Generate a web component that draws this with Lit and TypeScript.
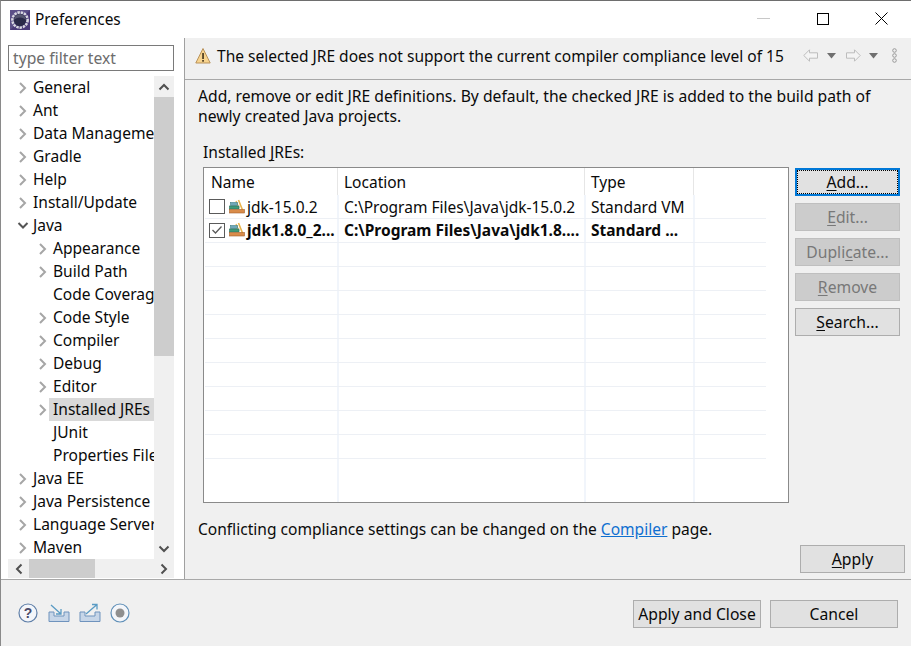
import { LitElement, html, css } from "lit";
import { customElement } from "lit/decorators.js";

const chevR = (c = "#a6a6a6") => html`<svg class="chev" width="10" height="12" viewBox="0 0 10 12"><path d="M2 1 L7 6 L2 11" fill="none" stroke=${c} stroke-width="2"/></svg>`;
const chevD = html`<svg class="chev" width="12" height="10" viewBox="0 0 12 10"><path d="M1.5 2 L6 6.5 L10.5 2" fill="none" stroke="#555" stroke-width="2"/></svg>`;

const jre = html`<svg class="jre" width="16" height="16" viewBox="0 0 16 16">
  <path d="M9.5 1 L14.5 13.5" stroke="#e9b44c" stroke-width="1.6" fill="none"/>
  <path d="M7 2 L10 9" stroke="#e9b44c" stroke-width="1.2" fill="none"/>
  <rect x="1.5" y="3.5" width="7" height="3" fill="#6fa8b8" stroke="#3f7f86" stroke-width=".6"/>
  <rect x="0.5" y="7" width="9.5" height="3" fill="#3f9a7a" stroke="#2b6f58" stroke-width=".6"/>
  <rect x="0.5" y="10.5" width="15" height="3.5" fill="#d98c4a" stroke="#a3602a" stroke-width=".6"/>
</svg>`;

type Node = { t: string; l: number; k?: "r" | "d" | "n"; sel?: boolean };
const tree: Node[] = [
  { t: "General", l: 0 }, { t: "Ant", l: 0 }, { t: "Data Management", l: 0 }, { t: "Gradle", l: 0 },
  { t: "Help", l: 0 }, { t: "Install/Update", l: 0 }, { t: "Java", l: 0, k: "d" },
  { t: "Appearance", l: 1 }, { t: "Build Path", l: 1 }, { t: "Code Coverage", l: 1, k: "n" },
  { t: "Code Style", l: 1 }, { t: "Compiler", l: 1 }, { t: "Debug", l: 1 }, { t: "Editor", l: 1 },
  { t: "Installed JREs", l: 1, sel: true }, { t: "JUnit", l: 1, k: "n" }, { t: "Properties Files Editor", l: 1, k: "n" },
  { t: "Java EE", l: 0 }, { t: "Java Persistence", l: 0 }, { t: "Language Servers", l: 0 }, { t: "Maven", l: 0 },
];

const arrow = (flip: boolean) => html`<svg class=${flip ? "flip" : ""} width="15" height="13" viewBox="0 0 15 13"><path d="M.8 6.5 L6.5 .8 V3.8 H14.5 V9.2 H6.5 V12.2 Z" fill="#f4f4f4" stroke="#bdbdbd"/></svg>`;
const drop = html`<svg width="9" height="6" viewBox="0 0 9 6"><path d="M0 0 H9 L4.5 5.5 Z" fill="#6f6f6f"/></svg>`;

@customElement("app-root")
export class AppRoot extends LitElement {
  static styles = css`
    :host { display: block; width: 911px; height: 646px; overflow: hidden; background: #f0f0f0;
      font-family: "Noto Sans", sans-serif; font-size: 15.55px; color: #0a0a0a; }
    .win { width: 911px; height: 646px; box-sizing: border-box; border-top: 1px solid #6e6e6e; border-left: 1px solid #8a8a8a; display: flex; flex-direction: column; }
    .title { height: 37px; flex: none; background: #fff; display: flex; align-items: center; }
    .logo { margin-left: 9px; width: 20px; height: 20px; flex: none; }
    .ttl { margin-left: 5px; font-size: 15.4px; }
    .wbtns { margin-left: auto; display: flex; align-items: center; padding-bottom: 2px; }
    .wbtn { width: 59px; height: 35px; display: flex; align-items: center; justify-content: center; }
    .main { height: 541px; flex: none; display: flex; }
    .left { width: 183px; flex: none; background: #fff; border-right: 1px solid #a0a0a0; }
    .filter { margin: 7px 0 0 7px; width: 166px; height: 26px; box-sizing: border-box; border: 1px solid #7a7a7a; color: #6d6d6d; padding-left: 4px; line-height: 25px; font-size: 15.7px; }
    .treewrap { margin: 5px 0 0 0; display: grid; grid-template-columns: 153px 20px; grid-template-rows: 483px 19px; width: 173px; }
    .tree { overflow: hidden; }
    .row { height: 23px; display: flex; align-items: center; white-space: nowrap; }
    .row.sel .txt { background: #d9d9d9; }
    .txt { padding: 0 0 0 4px; height: 23px; line-height: 23px; flex: 1; }
    .tw { width: 12px; display: flex; justify-content: center; flex: none; }
    .vs { background: #f0f0f0; display: flex; flex-direction: column; align-items: center; }
    .sbtn { height: 21px; flex: none; width: 100%; display: flex; align-items: center; justify-content: center; }
    .vthumb { height: 259px; width: 100%; background: #cdcdcd; flex: none; }
    .vspace { flex: 1; }
    .hs { grid-column: 1 / 3; background: #f0f0f0; margin-left: 7px; display: flex; align-items: center; height: 19px; }
    .hb { width: 21px; height: 19px; flex: none; display: flex; align-items: center; justify-content: center; }
    .hthumb { width: 66px; height: 19px; background: #cdcdcd; flex: none; }
    .right { flex: 1; min-width: 0; display: flex; flex-direction: column; }
    .msg { height: 35px; padding-bottom: 6px; flex: none; border-bottom: 1px solid #a8a8a8; display: flex; align-items: center; }
    .warn { margin-left: 9px; width: 18px; height: 18px; flex: none; }
    .mt { margin-left: 5px; white-space: nowrap; }
    .nav { margin-left: auto; display: flex; align-items: center; margin-right: 14px; }
    .flip { transform: scaleX(-1); }
    .g8 { margin-left: 8px; } .g9 { margin-left: 9px; } .g10 { margin-left: 10px; } .g14 { margin-left: 14px; }
    .content { flex: 1; padding: 5px 5px 0 13px; display: flex; flex-direction: column; min-height: 0; }
    .desc { line-height: 20px; height: 42px; font-size: 15.68px; white-space: nowrap; padding-top: 1px; box-sizing: border-box; }
    .lbl { margin: 15px 0 0 5px; height: 21px; line-height: 21px; }
    .u { text-decoration: underline; text-underline-offset: 2px; text-decoration-skip-ink: none; }
    .tblrow { display: flex; margin: 4px 0 0 5px; gap: 6px; }
    .tbl { width: 586px; flex: none; height: 336px; box-sizing: border-box; border: 1px solid #8a8a8a; background: #fff; display: flex; flex-direction: column; overflow: hidden; padding-left: 1px; font-size: 15.5px; }
    .r { display: grid; grid-template-columns: 134px 247px 109px 71px; width: 561px; flex: none; height: 24px; border-bottom: 1px solid #edf0f5; box-sizing: border-box; }
    .r > div { border-right: 2px solid #f1f5fb; padding: 0 0 0 5px; box-sizing: border-box; line-height: 22px; white-space: nowrap; overflow: hidden; display: flex; align-items: center; }
    .r.b > div { padding-bottom: 1px; }
    .r.head { grid-template-columns: 133px 247px 109px 72px; height: 27px; border-bottom: none; }
    .r.head > div { border-right: 1px solid #e6e6e6; padding: 0 0 0 6px; }
    .r > div:last-child, .r.head > div:last-child { border-right: none; }
    .r.b { font-weight: 700; }
    .r .nm { padding-left: 4px; gap: 4px; }
    .r .nm span:last-child { margin-left: -2px; }
    .fill { flex: 1; border-bottom: none; }
    .cb { width: 16px; height: 15px; box-sizing: border-box; border: 1px solid #5a5a5a; background: #fff; flex: none; display: flex; align-items: center; justify-content: center; }
    .btns { display: flex; flex-direction: column; gap: 7px; width: 105px; padding-top: 1px; flex: none; }
    .btn { width: 105px; height: 28px; box-sizing: border-box; border: 1px solid #adadad; background: #e1e1e1; display: flex; align-items: center; justify-content: center; color: #0a0a0a; padding-bottom: 1px; font-size: 15.7px; }
    .btn.dis { background: #cccccc; border-color: #bfbfbf; color: #787878; }
    .btn.def { border: 2px solid #0078d7; position: relative; }
    .btn.def::after { content: ""; position: absolute; inset: 0; border: 1px dotted #000; }
    .compl { margin-top: 16px; height: 21px; line-height: 21px; white-space: nowrap; }
    .compl a { color: #0f6fd0; text-decoration: underline; }
    .applyrow { display: flex; justify-content: flex-end; margin: 5px 1px 0 0; }
    .foot { flex: 1; border-top: 1px solid #a8a8a8; display: flex; align-items: center; }
    .ficons { display: flex; align-items: center; gap: 9px; margin-left: 17px; }
    .help { margin-right: 1px; }
    .fbtns { margin-left: auto; margin-right: 13px; margin-top: 2px; display: flex; gap: 9px; }
    .fbtns .btn { width: 128px; }
    svg { display: block; }
  `;

  render() {
    const jreRow = (cls: string, checked: boolean, n: string, l: string, t: string) => html`
      <div class="r ${cls}">
        <div class="nm"><span class="cb">${checked ? html`<svg width="12" height="10" viewBox="0 0 12 10"><path d="M1.5 5 L4.5 8 L10.5 1.5" fill="none" stroke="#5a5a5a" stroke-width="1.3"/></svg>` : ""}</span>${jre}<span>${n}</span></div>
        <div>${l}</div><div>${t}</div><div></div>
      </div>`;
    return html`<div class="win">
      <div class="title">
        <svg class="logo" viewBox="0 0 20 20">
          <rect width="20" height="20" fill="#4a3a78"/>
          <path d="M0 0 H20 L0 20 Z" fill="#5c5088"/>
          <circle cx="10" cy="10" r="7.6" fill="none" stroke="#d8d8e0" stroke-width="2.6" stroke-dasharray="2.4 .9"/>
          <circle cx="10" cy="10" r="6.2" fill="#2a2a48"/>
          <path d="M4 10 a6 6 0 0 1 12 0 a7 5 0 0 0 -12 0 Z" fill="#55556f"/>
        </svg>
        <span class="ttl">Preferences</span>
        <div class="wbtns">
          <div class="wbtn"><svg width="13" height="1" viewBox="0 0 13 1"><rect width="13" height="1" fill="#c8c8c8"/></svg></div>
          <div class="wbtn"><svg width="12" height="12" viewBox="0 0 12 12"><rect x=".5" y=".5" width="11" height="11" fill="none" stroke="#000"/></svg></div>
          <div class="wbtn"><svg width="13" height="13" viewBox="0 0 13 13"><path d="M.5 .5 L12.5 12.5 M12.5 .5 L.5 12.5" stroke="#000" fill="none"/></svg></div>
        </div>
      </div>
      <div class="main">
        <div class="left">
          <div class="filter">type filter text</div>
          <div class="treewrap">
            <div class="tree">
              ${tree.map((n) => html`<div class="row ${n.sel ? "sel" : ""}" style="padding-left:${n.l ? 36 : 16}px">
                <span class="tw">${n.k === "n" ? "" : n.k === "d" ? chevD : chevR()}</span>
                <span class="txt">${n.t}</span></div>`)}
            </div>
            <div class="vs">
              <div class="sbtn"><svg width="12" height="8" viewBox="0 0 12 8"><path d="M1.5 6.5 L6 2 L10.5 6.5" fill="none" stroke="#505050" stroke-width="2"/></svg></div>
              <div class="vthumb"></div>
              <div class="vspace"></div>
              <div class="sbtn"><svg width="12" height="8" viewBox="0 0 12 8"><path d="M1.5 1.5 L6 6 L10.5 1.5" fill="none" stroke="#505050" stroke-width="2"/></svg></div>
            </div>
            <div class="hs">
              <div class="hb"><svg width="8" height="12" viewBox="0 0 8 12"><path d="M6.5 1.5 L2 6 L6.5 10.5" fill="none" stroke="#505050" stroke-width="2"/></svg></div>
              <div class="hthumb"></div>
              <div class="vspace"></div>
              <div class="hb"><svg width="8" height="12" viewBox="0 0 8 12"><path d="M1.5 1.5 L6 6 L1.5 10.5" fill="none" stroke="#505050" stroke-width="2"/></svg></div>
            </div>
          </div>
        </div>
        <div class="right">
          <div class="msg">
            <svg class="warn" viewBox="0 0 18 18"><path d="M9 1.5 L16.2 16 H1.8 Z" fill="#f8d48e" stroke="#b9925a" stroke-linejoin="round"/><rect x="8.2" y="6" width="1.7" height="6" fill="#4a3a20"/><rect x="8.2" y="13" width="1.7" height="1.7" fill="#4a3a20"/></svg>
            <span class="mt">The selected JRE does not support the current compiler compliance level of 15</span>
            <div class="nav">${arrow(false)}<span class="g9">${drop}</span><span class="g10">${arrow(true)}</span><span class="g8">${drop}</span>
              <svg class="g14" width="5" height="15" viewBox="0 0 5 15"><g fill="none" stroke="#999"><circle cx="2.5" cy="2.5" r="1.8"/><circle cx="2.5" cy="7.5" r="1.8"/><circle cx="2.5" cy="12.5" r="1.8"/></g></svg>
            </div>
          </div>
          <div class="content">
            <div class="desc">Add, remove or edit JRE definitions. By default, the checked JRE is added to the build path of<br>newly created Java projects.</div>
            <div class="lbl">Installed <span class="u">J</span>REs:</div>
            <div class="tblrow">
              <div class="tbl">
                <div class="r head"><div>Name</div><div>Location</div><div>Type</div><div></div></div>
                ${jreRow("", false, "jdk-15.0.2", "C:\\Program Files\\Java\\jdk-15.0.2", "Standard VM")}
                ${jreRow("b", true, "jdk1.8.0_2...", "C:\\Program Files\\Java\\jdk1.8....", "Standard ...")}
                ${Array.from({ length: 9 }).map(() => html`<div class="r"><div></div><div></div><div></div><div></div></div>`)}
                <div class="r fill"><div></div><div></div><div></div><div></div></div>
              </div>
              <div class="btns">
                <div class="btn def"><span><span class="u">A</span>dd...</span></div>
                <div class="btn dis"><span><span class="u">E</span>dit...</span></div>
                <div class="btn dis"><span>Dupli<span class="u">c</span>ate...</span></div>
                <div class="btn dis"><span><span class="u">R</span>emove</span></div>
                <div class="btn"><span><span class="u">S</span>earch...</span></div>
              </div>
            </div>
            <div class="compl">Conflicting compliance settings can be changed on the <a>Compiler</a> page.</div>
            <div class="applyrow"><div class="btn"><span><span class="u">A</span>pply</span></div></div>
          </div>
        </div>
      </div>
      <div class="foot">
        <div class="ficons">
          <svg class="help" width="20" height="20" viewBox="0 0 20 20"><circle cx="10" cy="10" r="9" fill="#f4f6fa" stroke="#5f7fa8" stroke-width="1.2"/><text x="10" y="15" text-anchor="middle" font-size="14" font-weight="700" fill="#4a4a6a" font-family="Liberation Sans">?</text></svg>
          <svg width="22" height="20" viewBox="0 0 22 20"><path d="M1 9 V18.5 H21 V9 H16 V13 H6 V9 Z" fill="#c7d6e8" stroke="#6f93bd"/><path d="M3 2 L13 11 M13 6 V11 H8" fill="none" stroke="#5a9bc4" stroke-width="1.3"/></svg>
          <svg width="22" height="20" viewBox="0 0 22 20"><path d="M1 9 V18.5 H21 V9 H16 V13 H6 V9 Z" fill="#c7d6e8" stroke="#6f93bd"/><path d="M7 11 L18 1.5 M13 1.5 H18 V6.5" fill="none" stroke="#5a9bc4" stroke-width="1.3"/></svg>
          <svg width="20" height="20" viewBox="0 0 20 20"><circle cx="10" cy="10" r="9" fill="#f4f6fa" stroke="#5f8fb8" stroke-width="1.2"/><circle cx="10" cy="10" r="4.5" fill="#8f8f8f"/></svg>
        </div>
        <div class="fbtns">
          <div class="btn"><span>Apply and Close</span></div>
          <div class="btn"><span>Cancel</span></div>
        </div>
      </div>
    </div>`;
  }
}
